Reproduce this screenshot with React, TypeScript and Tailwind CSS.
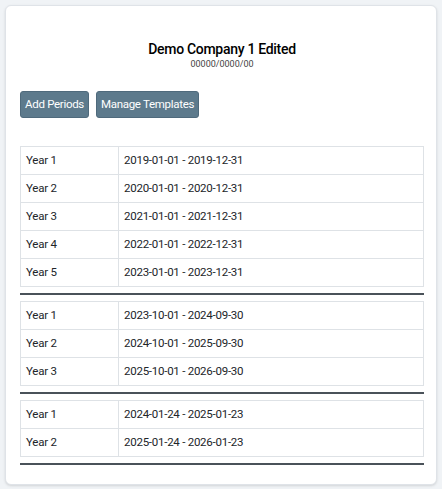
const groups: { label: string; range: string }[][] = [
  [
    { label: 'Year 1', range: '2019-01-01 - 2019-12-31' },
    { label: 'Year 2', range: '2020-01-01 - 2020-12-31' },
    { label: 'Year 3', range: '2021-01-01 - 2021-12-31' },
    { label: 'Year 4', range: '2022-01-01 - 2022-12-31' },
    { label: 'Year 5', range: '2023-01-01 - 2023-12-31' },
  ],
  [
    { label: 'Year 1', range: '2023-10-01 - 2024-09-30' },
    { label: 'Year 2', range: '2024-10-01 - 2025-09-30' },
    { label: 'Year 3', range: '2025-10-01 - 2026-09-30' },
  ],
  [
    { label: 'Year 1', range: '2024-01-24 - 2025-01-23' },
    { label: 'Year 2', range: '2025-01-24 - 2026-01-23' },
  ],
];

export default function App() {
  return (
    <div className="min-h-screen bg-[#f0f3f6] p-[5px] font-['Roboto',sans-serif] text-[#212529]">
      <div className="rounded-md border border-[#dfe3e8] bg-white pl-[14px] pr-[12px] pt-[34px] pb-[19px] shadow-sm">
        <div className="text-center">
          <h1 className="text-[14px] font-medium leading-[18px] tracking-[-0.3px] text-black">Demo Company 1 Edited</h1>
          <p className="text-[9px] leading-[12px] text-[#444]">00000/0000/00</p>
        </div>

        <div className="mt-[21px] flex gap-[7px]">
          <button className="h-[27px] rounded-[3px] border border-[#4f6a7c] bg-[#5d7a8c] px-[4px] text-[11.5px] tracking-[-0.3px] text-white">
            Add Periods
          </button>
          <button className="h-[27px] rounded-[3px] border border-[#4f6a7c] bg-[#5d7a8c] px-[4px] text-[11.5px] tracking-[-0.3px] text-white">
            Manage Templates
          </button>
        </div>

        <div className="mt-[28px] flex flex-col">
          {groups.map((rows, gi) => (
            <div key={gi} className="flex flex-col">
              {gi > 0 && <div className="h-[6px]" />}
              <table className="w-full border-collapse text-[11.5px] tracking-[-0.25px]">
                <tbody>
                  {rows.map((r, i) => (
                    <tr key={i} className="h-[28px]">
                      <td className="w-[98px] border border-[#dee2e6] px-[5px] align-middle">{r.label}</td>
                      <td className="border border-[#dee2e6] px-[5px] align-middle">{r.range}</td>
                    </tr>
                  ))}
                </tbody>
              </table>
              <div className="mt-[6px] h-[2px] bg-[#4a5259]" />
            </div>
          ))}
        </div>
      </div>
    </div>
  );
}
